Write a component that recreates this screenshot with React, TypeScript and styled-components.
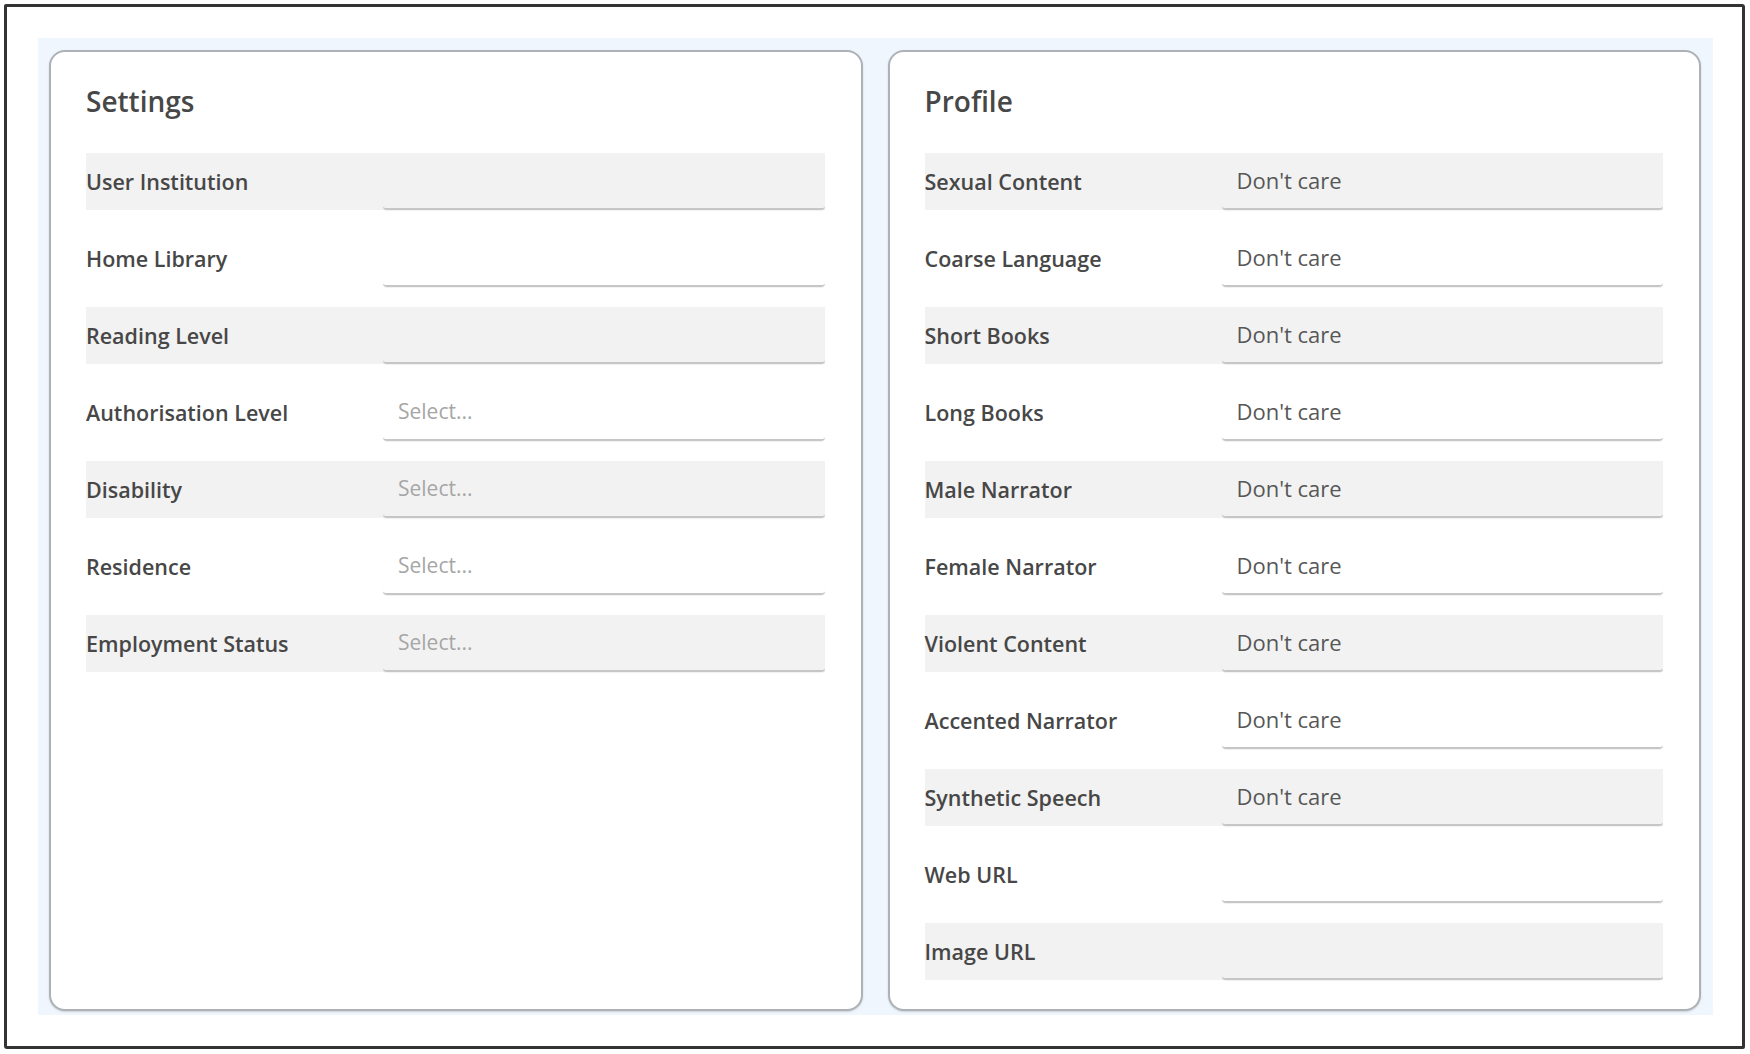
import React from "react";
import styled, { createGlobalStyle } from "styled-components";

interface Field {
  label: string;
  value?: string;
  placeholder?: string;
}

const settingsFields: Field[] = [
  { label: "User Institution" },
  { label: "Home Library" },
  { label: "Reading Level" },
  { label: "Authorisation Level", placeholder: "Select..." },
  { label: "Disability", placeholder: "Select..." },
  { label: "Residence", placeholder: "Select..." },
  { label: "Employment Status", placeholder: "Select..." },
];

const profileFields: Field[] = [
  { label: "Sexual Content", value: "Don't care" },
  { label: "Coarse Language", value: "Don't care" },
  { label: "Short Books", value: "Don't care" },
  { label: "Long Books", value: "Don't care" },
  { label: "Male Narrator", value: "Don't care" },
  { label: "Female Narrator", value: "Don't care" },
  { label: "Violent Content", value: "Don't care" },
  { label: "Accented Narrator", value: "Don't care" },
  { label: "Synthetic Speech", value: "Don't care" },
  { label: "Web URL" },
  { label: "Image URL" },
];

function FieldList({ fields }: { fields: Field[] }) {
  return (
    <ScRows>
      {fields.map((f, i) => (
        <ScRow key={f.label} striped={i % 2 === 0}>
          <ScLabel>{f.label}</ScLabel>
          <ScInput>
            {f.value && <ScValue>{f.value}</ScValue>}
            {f.placeholder && <ScPlaceholder>{f.placeholder}</ScPlaceholder>}
          </ScInput>
        </ScRow>
      ))}
    </ScRows>
  );
}

export default function App() {
  return (
    <>
      <GlobalStyle />
      <ScFrame>
        <ScBoard>
          <ScCard>
            <ScTitle>Settings</ScTitle>
            <FieldList fields={settingsFields} />
          </ScCard>
          <ScCard>
            <ScTitle>Profile</ScTitle>
            <FieldList fields={profileFields} />
          </ScCard>
        </ScBoard>
      </ScFrame>
    </>
  );
}

const GlobalStyle = createGlobalStyle`
  html, body {
    margin: 0;
    padding: 0;
    background: #ffffff;
    font-family: "Open Sans", "Noto Sans", "Liberation Sans", sans-serif;
  }
  * {
    box-sizing: border-box;
  }
`;

const ScFrame = styled.div`
  margin: 4px 5px 5px 4px;
  border: 3px solid #333333;
  border-radius: 2px 3px 2px 3px;
  padding: 31px 29px 31px 31px;
  background: #ffffff;
`;

const ScBoard = styled.div`
  display: grid;
  grid-template-columns: 1fr 1fr;
  gap: 25px;
  padding: 12px 12px 4px 11px;
  background: #eff6fd;
`;

const ScCard = styled.div`
  background: #ffffff;
  border: 2px solid #aeb2b7;
  border-radius: 16px;
  box-shadow: 0 1px 2px rgba(0, 0, 0, 0.15);
  padding: 30px 36px 29px 35px;
`;

const ScTitle = styled.h2`
  margin: 0 0 33px;
  font-size: 28px;
  line-height: 38px;
  font-weight: 600;
  color: #474747;
`;

const ScRows = styled.div`
  display: flex;
  flex-direction: column;
  gap: 20px;
`;

const ScRow = styled.div<{ striped: boolean }>`
  display: grid;
  grid-template-columns: 297px 1fr;
  height: 57px;
  background: ${(props) => (props.striped ? "#f2f2f2" : "transparent")};
`;

const ScLabel = styled.div`
  display: flex;
  align-items: center;
  font-size: 21.5px;
  font-weight: 600;
  color: #474747;
`;

const ScInput = styled.div`
  display: flex;
  align-items: center;
  padding: 0 15px 2px;
  border-bottom: 2px solid #c6c6c6;
  border-radius: 4px;
  box-shadow: 0 1px 1px rgba(0, 0, 0, 0.06);
`;

const ScValue = styled.span`
  font-size: 22px;
  color: #575757;
`;

const ScPlaceholder = styled.span`
  font-size: 21px;
  color: #a6a6a6;
`;
